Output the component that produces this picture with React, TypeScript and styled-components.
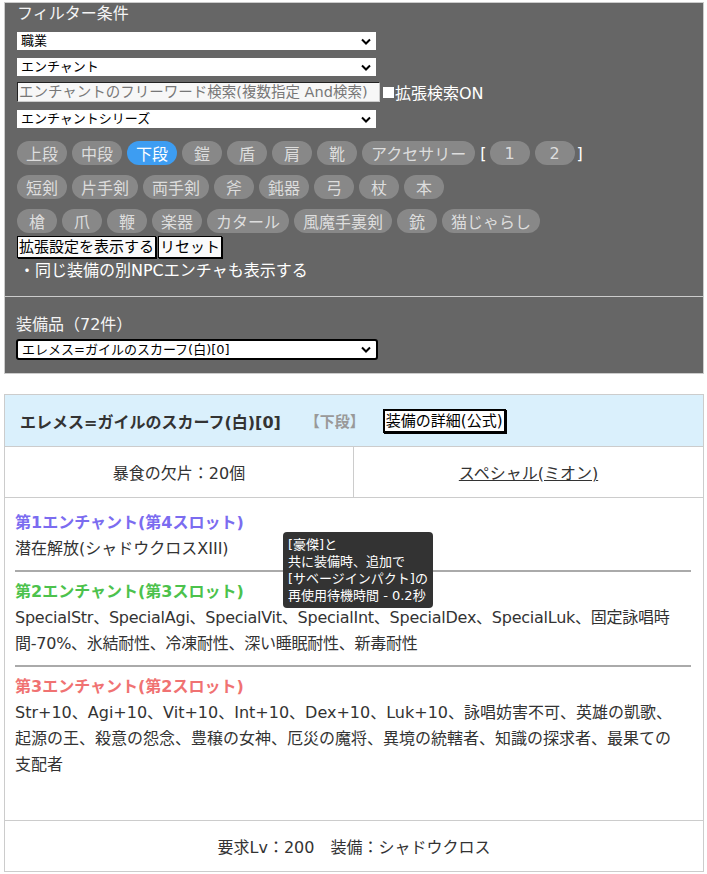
import styled, { createGlobalStyle } from "styled-components";

const GlobalStyle = createGlobalStyle`
  body {
    margin: 0;
    background: #fff;
    font-family: "DejaVu Sans", "Noto Sans CJK JP", sans-serif;
    color: #333;
  }
  * { box-sizing: border-box; }
`;

const Page = styled.div`
  padding: 2px 3px 3px 4px;
`;

const FilterPanel = styled.div`
  background: #666;
  border: 1px solid #ccc;
  color: #fff;
`;

const FilterSection = styled.div`
  padding: 0 12px 12px 12px;
`;

const ItemSection = styled.div`
  border-top: 1px solid #ccc;
  padding: 17px 12px 13px 11px;
`;

const PanelTitle = styled.div`
  font-size: 16px;
  line-height: 22px;
  color: #f4f4f4;
`;

// closed dropdown look
const SelectBox = styled.div<{ $mt: number; $focused?: boolean }>`
  display: flex;
  align-items: center;
  justify-content: space-between;
  width: ${({ $focused }) => ($focused ? "362px" : "359px")};
  height: ${({ $focused }) => ($focused ? "21px" : "18px")};
  margin-top: ${({ $mt }) => $mt}px;
  padding: 0 5px 0 4px;
  background: #fff;
  border: ${({ $focused }) => ($focused ? "2px solid #000" : "none")};
  border-radius: ${({ $focused }) => ($focused ? "3px" : "0")};
  font-size: 13px;
  line-height: 16px;
  color: #000;
  cursor: default;
`;

const SearchRow = styled.div`
  display: flex;
  align-items: center;
  margin-top: 6px;
  height: 20px;
`;

const SearchInput = styled.input`
  width: 363px;
  height: 20px;
  border: 1px solid;
  border-color: #222 #ccc #ccc #222;
  background: #f7f7f7;
  font-family: inherit;
  font-size: 14.5px;
  padding: 0 0 0 1px;
  &::placeholder {
    color: #777;
  }
`;

const CheckLabel = styled.label`
  display: flex;
  align-items: center;
  font-size: 16px;
  color: #fff;
  margin-left: 3px;
  white-space: nowrap;
`;

const Check = styled.input`
  appearance: none;
  width: 11px;
  height: 11px;
  margin: 0 1px 0 0;
  background: #fff;
  border: none;
`;

const PillRow = styled.div<{ $mt: number }>`
  display: flex;
  align-items: center;
  gap: 5px;
  margin-top: ${({ $mt }) => $mt}px;
`;

const Pill = styled.span<{ $active?: boolean }>`
  display: inline-flex;
  justify-content: center;
  align-items: center;
  min-width: 40px;
  height: 24px;
  padding: 0 9px;
  border-radius: 12px;
  font-size: 16px;
  background: ${({ $active }) => ($active ? "#3d9df2" : "#888")};
  color: ${({ $active }) => ($active ? "#fff" : "#ddd")};
`;

const Bracket = styled.span<{ $close?: boolean }>`
  font-size: 16px;
  color: #fff;
  margin: ${({ $close }) => ($close ? "0 0 0 -3px" : "0 -2px 0 0")};
`;

const ButtonRow = styled.div`
  display: flex;
  gap: 2px;
  margin-top: 3px;
`;

const PlainButton = styled.button`
  height: 22px;
  padding: 0 1px;
  background: #fafafa;
  border: 1px solid #000;
  box-shadow: 1px 1px 0 #000;
  font-family: inherit;
  font-size: 15px;
  line-height: 18px;
  color: #000;
`;

const Note = styled.div`
  font-size: 16px;
  line-height: 26px;
  color: #fff;
  padding-left: 2px;
`;

const Card = styled.div`
  margin-top: 20px;
  border: 1px solid #ccc;
`;

const CardHeader = styled.div`
  display: flex;
  align-items: center;
  height: 52px;
  padding: 0 15px;
  background: #daf0fc;
  border-bottom: 1px solid #ccc;
`;

const ItemName = styled.span`
  font-size: 16px;
  font-weight: 700;
  color: #333;
`;

const SlotTag = styled.span`
  font-size: 15px;
  font-weight: 700;
  color: #999;
  margin-left: 24px;
`;

const DetailButton = styled(PlainButton)`
  height: 24px;
  margin-left: 18px;
  padding: 0 2px;
  box-shadow: 1px 1px 0 #000, inset 0 0 0 1px #000;
  background: #fff;
`;

const InfoRow = styled.div`
  display: grid;
  grid-template-columns: 348px 1fr;
  height: 51px;
  border-bottom: 1px solid #ccc;
`;

const InfoCell = styled.div<{ $link?: boolean }>`
  display: flex;
  align-items: center;
  justify-content: center;
  font-size: 16px;
  color: #333;
  text-decoration: ${({ $link }) => ($link ? "underline" : "none")};
  & + & {
    border-left: 1px solid #ccc;
  }
`;

const Content = styled.div`
  position: relative;
  padding: 12px 12px 42px 10px;
`;

const EnchantTitle = styled.div<{ $color: string }>`
  font-size: 16px;
  line-height: 26px;
  font-weight: 700;
  color: ${({ $color }) => $color};
`;

const EnchantText = styled.div<{ $tight?: boolean }>`
  margin-right: 10px;
  font-size: 16px;
  line-height: 26px;
  letter-spacing: ${({ $tight }) => ($tight ? "-0.25px" : "0")};
  color: #333;
`;

const Rule = styled.hr`
  margin: 8px 0 7px;
  border: none;
  border-top: 2px solid #aaa;
`;

const Tooltip = styled.div`
  position: absolute;
  top: 34px;
  left: 278px;
  padding: 4px 5px;
  background: #333;
  border-radius: 4px;
  color: #fff;
  font-size: 13px;
  line-height: 17px;
  white-space: nowrap;
`;

const Footer = styled.div`
  display: flex;
  align-items: center;
  justify-content: center;
  height: 51px;
  border-top: 1px solid #ccc;
  font-size: 16px;
  color: #333;
`;

const Chevron = () => (
  <svg width="10" height="7" viewBox="0 0 10 7">
    <path d="M1 1.5l4 4 4-4" fill="none" stroke="#000" strokeWidth="2" />
  </svg>
);

const Dropdown = ({ label, mt, focused }: { label: string; mt: number; focused?: boolean }) => (
  <SelectBox $mt={mt} $focused={focused}>
    <span>{label}</span>
    <Chevron />
  </SelectBox>
);

const rows: string[][] = [
  ["短剣", "片手剣", "両手剣", "斧", "鈍器", "弓", "杖", "本"],
  ["槍", "爪", "鞭", "楽器", "カタール", "風魔手裏剣", "銃", "猫じゃらし"],
];

const armor = ["上段", "中段", "下段", "鎧", "盾", "肩", "靴", "アクセサリー"];

export default function App() {
  return (
    <Page>
      <GlobalStyle />
      <FilterPanel>
        <FilterSection>
          <PanelTitle>フィルター条件</PanelTitle>
          <Dropdown label="職業" mt={7} />
          <Dropdown label="エンチャント" mt={8} />
          <SearchRow>
            <SearchInput placeholder="エンチャントのフリーワード検索(複数指定 And検索)" />
            <CheckLabel>
              <Check type="checkbox" />
              拡張検索ON
            </CheckLabel>
          </SearchRow>
          <Dropdown label="エンチャントシリーズ" mt={8} />
          <PillRow $mt={13}>
            {armor.map((a) => (
              <Pill key={a} $active={a === "下段"}>
                {a}
              </Pill>
            ))}
            <Bracket>[</Bracket>
            <Pill>1</Pill>
            <Pill>2</Pill>
            <Bracket $close>]</Bracket>
          </PillRow>
          {rows.map((r, i) => (
            <PillRow key={i} $mt={10}>
              {r.map((w) => (
                <Pill key={w}>{w}</Pill>
              ))}
            </PillRow>
          ))}
          <ButtonRow>
            <PlainButton>拡張設定を表示する</PlainButton>
            <PlainButton>リセット</PlainButton>
          </ButtonRow>
          <Note>・同じ装備の別NPCエンチャも表示する</Note>
        </FilterSection>
        <ItemSection>
          <PanelTitle>装備品（72件）</PanelTitle>
          <Dropdown label="エレメス=ガイルのスカーフ(白)[0]" mt={3} focused />
        </ItemSection>
      </FilterPanel>

      <Card>
        <CardHeader>
          <ItemName>エレメス=ガイルのスカーフ(白)[0]</ItemName>
          <SlotTag>【下段】</SlotTag>
          <DetailButton>装備の詳細(公式)</DetailButton>
        </CardHeader>
        <InfoRow>
          <InfoCell>暴食の欠片：20個</InfoCell>
          <InfoCell $link>スペシャル(ミオン)</InfoCell>
        </InfoRow>
        <Content>
          <EnchantTitle $color="#7b6cf0">第1エンチャント(第4スロット)</EnchantTitle>
          <EnchantText>潜在解放(シャドウクロスXIII)</EnchantText>
          <Rule />
          <EnchantTitle $color="#4cc24c">第2エンチャント(第3スロット)</EnchantTitle>
          <EnchantText $tight>
            SpecialStr、SpecialAgi、SpecialVit、SpecialInt、SpecialDex、SpecialLuk、固定詠唱時間-70%、氷結耐性、冷凍耐性、深い睡眠耐性、新毒耐性
          </EnchantText>
          <Rule />
          <EnchantTitle $color="#f07272">第3エンチャント(第2スロット)</EnchantTitle>
          <EnchantText>
            Str+10、Agi+10、Vit+10、Int+10、Dex+10、Luk+10、詠唱妨害不可、英雄の凱歌、起源の王、殺意の怨念、豊穣の女神、厄災の魔将、異境の統轄者、知識の探求者、最果ての支配者
          </EnchantText>
          <Tooltip>
            [豪傑]と
            <br />
            共に装備時、追加で
            <br />
            [サベージインパクト]の
            <br />
            再使用待機時間 - 0.2秒
          </Tooltip>
        </Content>
        <Footer>要求Lv：200　装備：シャドウクロス</Footer>
      </Card>
    </Page>
  );
}
